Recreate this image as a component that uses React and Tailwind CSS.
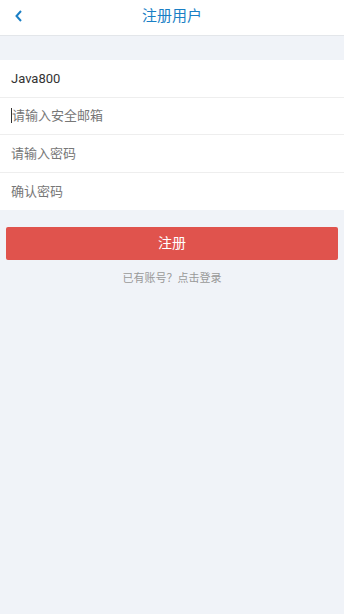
export default function App() {
  const font = { fontFamily: 'Roboto, "Noto Sans CJK SC", sans-serif' };
  return (
    <div className="min-h-[614px] w-full bg-[#f0f3f8] flex flex-col" style={font}>
      <div className="h-[36px] bg-white border-b border-[#e3e6ea] flex items-center relative">
        <div className="absolute left-[11px] top-[7px] w-[16px] h-[18px] flex items-center justify-center">
          <svg width="10" height="14" viewBox="0 0 10 14">
            <path d="M7 2 L2.5 7 L7 12" fill="none" stroke="#1a7fc5" strokeWidth="2" />
          </svg>
        </div>
        <div className="flex-1 text-center text-[15px] text-[#1a7fc5] leading-none pb-[2px]">注册用户</div>
      </div>
      <div className="mt-[24px] bg-white flex flex-col">
        <div className="h-[37.5px] flex items-center px-[11px] text-[13px] text-[#333] border-b border-[#eeeeee]">Java800</div>
        <div className="h-[37.5px] flex items-center px-[11px] text-[13px] text-[#777] border-b border-[#eeeeee]">
          <span className="w-px h-[15px] bg-[#333]"></span>请输入安全邮箱
        </div>
        <div className="h-[37.5px] flex items-center px-[11px] text-[13px] text-[#777] border-b border-[#eeeeee]">请输入密码</div>
        <div className="h-[37.5px] flex items-center px-[11px] text-[13px] text-[#777]">确认密码</div>
      </div>
      <div className="mt-[17px] mx-[6px] h-[33px] bg-[#e0534d] rounded-[2px] flex items-center justify-center text-white text-[14px]">注册</div>
      <div className="mt-[11px] text-center text-[11px] text-[#999]">已有账号？点击登录</div>
    </div>
  );
}
